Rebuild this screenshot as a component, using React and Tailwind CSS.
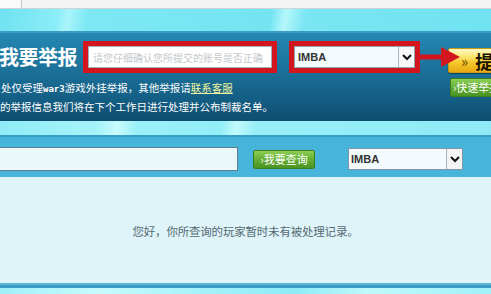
export default function App() {
  const cjk = { fontFamily: '"Noto Sans CJK SC", "Noto Sans", sans-serif' };
  return (
    <div className="w-[491px] h-[294px] overflow-hidden relative bg-[#dff4f9]" style={cjk}>
      {/* top browser strip */}
      <div className="h-[9px] bg-[#f4f4f4] border-b border-[#cfd3d6] flex">
        <div className="w-[22px] h-full border-r border-[#c8c8c8] bg-[#fafafa]" />
      </div>
      {/* cyan band */}
      <div className="h-[22px] bg-[linear-gradient(100deg,#6fe2f2_0%,#8cedf7_12%,#aaf5fb_14%,#7de8f4_18%,#74e4f3_55%,#b5f7fb_58%,#7ae6f3_62%,#70e2f2_100%)]" />
      <div className="h-[2px] bg-[#3b9cc2]" />
      {/* header panel */}
      <div className="h-[88px] relative overflow-hidden bg-[linear-gradient(180deg,#2488b1_0%,#1c729b_40%,#145e84_75%,#0f4d6e_100%)] flex flex-col">
        <div className="flex items-start pt-[8px]">
          <div className="w-[84px] shrink-0 h-[32px] flex items-center text-[20px] font-bold text-white leading-none tracking-[-0.5px] -ml-[1px]">
            我要举报
          </div>
          <div className="w-[194px] shrink-0 h-[32px] border-[5px] border-[#d3151d] bg-[#d3151d] flex">
            <div className="flex-1 bg-white border border-[#9fb3bf] flex items-center pl-[4px] text-[10px] text-[#c4c9cc] whitespace-nowrap overflow-hidden">
              请您仔细确认您所提交的账号是否正确
            </div>
          </div>
          <div className="w-[12px] shrink-0" />
          <div className="w-[131px] shrink-0 h-[32px] border-[5px] border-[#d3151d] bg-[#d3151d] flex">
            <div className="flex-1 bg-[#f4fbfe] border border-[#8fa5b3] flex items-center">
              <span className="flex-1 pl-[3px] text-[11px] text-[#333] font-semibold" style={{ fontFamily: '"Liberation Sans", Arial, sans-serif' }}>IMBA</span>
              <span className="w-[16px] h-full border-l border-[#a9b8c2] bg-[#f8f8f8] flex items-center justify-center">
                <svg width="10" height="7" viewBox="0 0 10 7"><path d="M1 1 L5 5 L9 1" fill="none" stroke="#111" strokeWidth="2" /></svg>
              </span>
            </div>
          </div>
          <div className="w-[28px] shrink-0" />
          <div className="w-[70px] shrink-0 h-[25px] mt-[7px] rounded-[2px] border border-[#c99a10] bg-[linear-gradient(180deg,#fff9c8_0%,#fbe878_30%,#f3c72a_60%,#e8a812_100%)] flex items-center pl-[12px] gap-[7px] shadow-[0_1px_1px_rgba(0,0,0,0.4)]">
            <span className="text-[15px] text-[#6b4a00] leading-none">»</span>
            <span className="text-[18px] font-bold text-[#1a1200] leading-none">提交</span>
          </div>
        </div>
        <div className="flex items-start mt-[6px]">
          <div className="w-[450px] shrink-0 flex flex-col text-[10.5px] leading-[17px] text-white whitespace-nowrap">
            <div className="pl-[1px]">
              处仅受理<span className="text-[9px] font-bold" style={{ fontFamily: '"DejaVu Sans Mono", monospace' }}>war3</span>游戏外挂举报，其他举报请<span className="underline text-[#f0f4a0]">联系客服</span>
            </div>
            <div>的举报信息我们将在下个工作日进行处理并公布制裁名单。</div>
          </div>
          <div className="w-[70px] shrink-0 h-[19px] mt-[-1px] rounded-[2px] border border-[#3f7d1e] bg-[linear-gradient(180deg,#8dcf55_0%,#64ae34_50%,#4a9322_100%)] flex items-center pl-[2px] text-[11px] text-white whitespace-nowrap leading-none">
            ›快速举报
          </div>
        </div>
        {/* red arrow overlay */}
        <svg className="absolute left-[419px] top-[14px]" width="42" height="20" viewBox="0 0 42 20">
          <rect x="0" y="7.5" width="26" height="5" fill="#d3151d" />
          <polygon points="22,0 41,10 22,20" fill="#d3151d" />
        </svg>
      </div>
      {/* lower cyan band */}
      <div className="h-[14px] bg-[linear-gradient(100deg,#8fecf6_0%,#a6f3fa_20%,#c9fbfd_24%,#9af0f8_28%,#93eef7_45%,#c2fafd_48%,#98eff8_52%,#8eebf6_100%)]" />
      <div className="h-[2px] bg-[#3a9dc2]" />
      {/* query band */}
      <div className="h-[40px] bg-[#47b5d9] flex items-start">
        <div className="w-[238px] shrink-0 h-[24px] mt-[10px] bg-[#eaf7fb] border border-[#5f7f8f] border-l-0" />
        <div className="w-[15px] shrink-0" />
        <div className="w-[62px] shrink-0 h-[19px] mt-[13px] rounded-[2px] border border-[#3f7d1e] bg-[linear-gradient(180deg,#8dcf55_0%,#64ae34_50%,#4a9322_100%)] flex items-center justify-center text-[11px] text-white whitespace-nowrap leading-none">
          ›我要查询
        </div>
        <div className="w-[33px] shrink-0" />
        <div className="w-[115px] shrink-0 h-[22px] mt-[11px] bg-[#f4fbfe] border border-[#7f97a6] flex items-center">
          <span className="flex-1 pl-[2px] text-[11px] text-[#333] font-semibold" style={{ fontFamily: '"Liberation Sans", Arial, sans-serif' }}>IMBA</span>
          <span className="w-[16px] h-full border-l border-[#a9b8c2] bg-[#f4f4f4] flex items-center justify-center">
            <svg width="10" height="7" viewBox="0 0 10 7"><path d="M1 1 L5 5 L9 1" fill="none" stroke="#111" strokeWidth="2" /></svg>
          </span>
        </div>
      </div>
      {/* result area */}
      <div className="h-[106px] bg-[#dff4f9] flex items-center justify-center pt-[4px]">
        <span className="text-[11.5px] text-[#556a72] tracking-[-0.2px]">您好，你所查询的玩家暂时未有被处理记录。</span>
      </div>
      <div className="h-[2px] bg-[#5cb7d6]" />
      <div className="h-[3px] bg-[#3a9bc3]" />
      <div className="h-[8px] bg-[linear-gradient(90deg,#9ff0f8_0%,#c6fbfd_20%,#a6f2f9_40%,#8eecf6_60%,#bff9fc_75%,#a0f1f8_100%)]" />
    </div>
  );
}
